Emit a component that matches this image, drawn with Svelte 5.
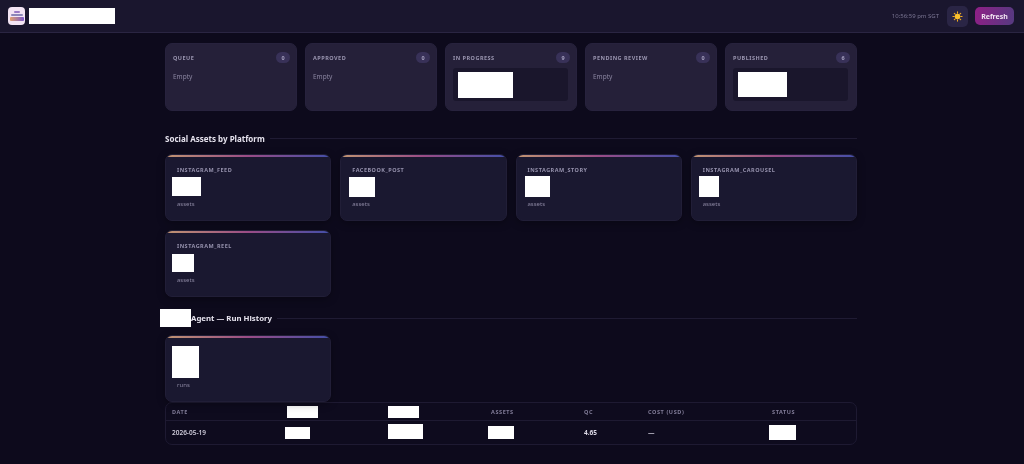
<script>
	const columns = [
		{ name: "QUEUE", count: 0 },
		{ name: "APPROVED", count: 0 },
		{ name: "IN PROGRESS", count: 9, box: 55, boxH: 26 },
		{ name: "PENDING REVIEW", count: 0 },
		{ name: "PUBLISHED", count: 6, box: 49, boxH: 25 },
	];
	const platforms = [
		{ name: "INSTAGRAM_FEED", w: 29, h: 19, dx: 0 },
		{ name: "FACEBOOK_POST", w: 26, h: 20, dx: 2 },
		{ name: "INSTAGRAM_STORY", w: 25, h: 21, dx: 2 },
		{ name: "INSTAGRAM_CAROUSEL", w: 20, h: 21, dx: 1 },
		{ name: "INSTAGRAM_REEL", w: 22, h: 18, dx: 0 },
	];
</script>

<header class="topbar">
	<div class="brand">
		<div class="logo">
			<span class="logo-a"></span>
			<span class="logo-b"></span>
			<span class="logo-c"></span>
		</div>
		<div class="redact title-redact"></div>
	</div>
	<div class="actions">
		<span class="clock">10:56:59 pm SGT</span>
		<button class="theme" aria-label="Theme">
			<svg viewBox="0 0 24 24" width="11" height="11">
				<g stroke="#f2a91e" stroke-width="2.4" stroke-linecap="round">
					<path d="M12 2v3M12 19v3M2 12h3M19 12h3M5 5l2 2M17 17l2 2M5 19l2-2M17 7l2-2" />
				</g>
				<circle cx="12" cy="12" r="6" fill="#fbc02d" />
			</svg>
		</button>
		<button class="refresh">Refresh</button>
	</div>
</header>

<main class="page">
	<section class="board">
		{#each columns as col}
			<div class="column">
				<div class="col-head">
					<span class="col-name">{col.name}</span>
					<span class="col-count">{col.count}</span>
				</div>
				{#if col.box}
					<div class="task">
						<div class="redact" style="width: {col.box}px; height: {col.boxH}px"></div>
					</div>
				{:else}
					<div class="empty">Empty</div>
				{/if}
			</div>
		{/each}
	</section>

	<div class="section-head first">
		<h2>Social Assets by Platform</h2>
		<span class="rule"></span>
	</div>

	<section class="stats">
		{#each platforms as p}
			<div class="stat">
				<div class="stat-label">{p.name}</div>
				<div class="stat-value">
					<div class="redact" style="width: {p.w}px; height: {p.h}px; margin-left: {p.dx}px"></div>
				</div>
				<div class="stat-unit">assets</div>
			</div>
		{/each}
	</section>

	<div class="section-head second">
		<div class="redact agent-redact"></div>
		<h2 class="tight">Agent — Run History</h2>
		<span class="rule"></span>
	</div>

	<section class="stats">
		<div class="stat runs">
			<div class="redact runs-redact"></div>
			<div class="stat-unit">runs</div>
		</div>
	</section>

	<div class="table-wrap">
		<div class="row head">
			<span>DATE</span>
			<span class="nudge-2"><div class="redact" style="width: 31px; height: 12px"></div></span>
			<span><div class="redact" style="width: 31px; height: 12px"></div></span>
			<span class="nudge-3">ASSETS</span>
			<span>QC</span>
			<span>COST (USD)</span>
			<span class="nudge-3">STATUS</span>
		</div>
		<div class="row body">
			<span>2026-05-19</span>
			<span><div class="redact" style="width: 25px; height: 12px"></div></span>
			<span><div class="redact raised" style="width: 35px; height: 15px"></div></span>
			<span><div class="redact" style="width: 26px; height: 13px"></div></span>
			<span class="strong">4.65</span>
			<span>—</span>
			<span><div class="redact" style="width: 27px; height: 15px"></div></span>
		</div>
	</div>
</main>

<style>
	:global(body) {
		margin: 0;
		background: #0d0a1c;
		font-family: "Noto Sans", "Open Sans", sans-serif;
		color: #e8e6f0;
	}

	.topbar {
		height: 32px;
		display: flex;
		align-items: center;
		justify-content: space-between;
		padding: 0 10px 0 8px;
		background: #1a162e;
		border-bottom: 1px solid #2a2542;
		will-change: transform;
	}

	.brand {
		display: flex;
		align-items: center;
		gap: 4px;
	}

	.logo {
		width: 17px;
		height: 18px;
		border-radius: 4px;
		background: #f3e4f4;
		display: flex;
		flex-direction: column;
		align-items: center;
		justify-content: center;
		gap: 1px;
	}

	.logo span {
		display: block;
		border-radius: 1px;
	}

	.logo-a {
		width: 6px;
		height: 2px;
		background: #9a7ac4;
	}

	.logo-b {
		width: 12px;
		height: 2px;
		background: #8c86b8;
	}

	.logo-c {
		width: 14px;
		height: 4px;
		background: linear-gradient(90deg, #e0a070, #7a58c8);
	}

	.redact {
		background: #fff;
	}

	.title-redact {
		width: 86px;
		height: 16px;
	}

	.actions {
		display: flex;
		align-items: center;
	}

	.clock {
		font-size: 6px;
		color: #7a7592;
		margin-right: 8px;
	}

	.theme {
		width: 21px;
		height: 21px;
		padding: 0;
		border: 0;
		border-radius: 5px;
		background: #2a2545;
		display: flex;
		align-items: center;
		justify-content: center;
		margin-right: 7px;
	}

	.refresh {
		width: 39px;
		height: 18px;
		padding: 0;
		border: 0;
		border-radius: 5px;
		background: linear-gradient(100deg, #8f1f86, #553a80);
		color: #f2e6f2;
		font: 700 7px "Noto Sans", sans-serif;
	}

	.page {
		width: 692px;
		margin-left: 165px;
		padding-top: 10px;
		will-change: transform;
	}

	.board {
		display: grid;
		grid-template-columns: repeat(5, 1fr);
		gap: 8px;
	}

	.column {
		height: 68px;
		box-sizing: border-box;
		padding: 8px 6px 8px 7px;
		border-radius: 7px;
		background: #252039;
		border: 1px solid #27223d;
	}

	.col-head {
		display: flex;
		align-items: center;
		justify-content: space-between;
		height: 11px;
		margin-bottom: 5px;
	}

	.col-name {
		font-size: 5.5px;
		font-weight: 700;
		letter-spacing: 0.5px;
		color: #9a95b0;
	}

	.col-count {
		width: 14px;
		height: 11px;
		border-radius: 6px;
		background: #383158;
		color: #a6a1c0;
		font-size: 5.5px;
		font-weight: 700;
		display: flex;
		align-items: center;
		justify-content: center;
	}

	.empty {
		font-size: 6.5px;
		color: #8a85a0;
		margin-top: 9px;
	}

	.task {
		height: 33px;
		box-sizing: border-box;
		padding: 3px 5px;
		margin-right: 2px;
		border-radius: 3px;
		background: #1a162c;
		display: flex;
		align-items: center;
	}

	.section-head {
		display: flex;
		align-items: center;
		gap: 5px;
		height: 12px;
	}

	.section-head.first {
		margin-top: 21px;
		margin-bottom: 10px;
	}

	.section-head.second {
		margin-top: 15px;
		margin-bottom: 11px;
	}

	.section-head h2 {
		margin: 0;
		font-size: 8px;
		font-weight: 700;
		color: #e6e3ee;
		white-space: nowrap;
	}

	.section-head h2.tight {
		font-size: 7.8px;
	}

	.rule {
		flex: 1;
		height: 1px;
		background: #1f1b33;
	}

	.agent-redact {
		width: 31px;
		height: 18px;
		margin-left: -5px;
		margin-right: -5px;
		flex: none;
	}

	.stats {
		display: grid;
		grid-template-columns: repeat(4, 1fr);
		gap: 9px;
	}

	.stat {
		height: 67px;
		box-sizing: border-box;
		padding: 10.5px 6px 0 6px;
		border-radius: 7px;
		background: #1a1830;
		border: 1px solid #211e37;
		position: relative;
		overflow: hidden;
		box-shadow: 0 2px 8px rgba(0, 0, 0, 0.3);
	}

	.stat::before {
		content: "";
		position: absolute;
		top: 0;
		left: 0;
		right: 0;
		height: 1.5px;
		background: linear-gradient(90deg, #c09472, #9a4c86 50%, #444fa8);
	}

	.stat-label {
		font-size: 5.5px;
		font-weight: 700;
		letter-spacing: 0.5px;
		color: #9591ac;
		padding-left: 5px;
		line-height: 8px;
	}

	.stat-value {
		height: 21px;
		display: flex;
		align-items: center;
		margin-top: 2.5px;
	}

	.stat-unit {
		font-size: 6px;
		color: #8a85a0;
		padding-left: 5px;
		margin-top: 3px;
	}

	.runs {
		padding-top: 10px;
	}

	.runs-redact {
		width: 27px;
		height: 32px;
	}

	.table-wrap {
		border: 1px solid #1e1a32;
		border-radius: 7px;
		background: #0e0b1e;
	}

	.row {
		display: grid;
		grid-template-columns: 113px 103px 100px 96px 64px 121px 1fr;
		align-items: center;
		padding: 0 6px;
	}

	.row.head {
		height: 17px;
		font-size: 5.5px;
		font-weight: 700;
		letter-spacing: 0.6px;
		color: #817c98;
		border-bottom: 1px solid #1e1a32;
	}

	.row.body {
		height: 23px;
		font-size: 6.5px;
		font-weight: 600;
		color: #cfccdb;
	}

	.nudge-2 {
		padding-left: 2px;
	}

	.nudge-3 {
		padding-left: 3px;
	}

	.raised {
		margin-top: -3px;
	}

	.strong {
		font-weight: 700;
		color: #dcd9e6;
	}
</style>
